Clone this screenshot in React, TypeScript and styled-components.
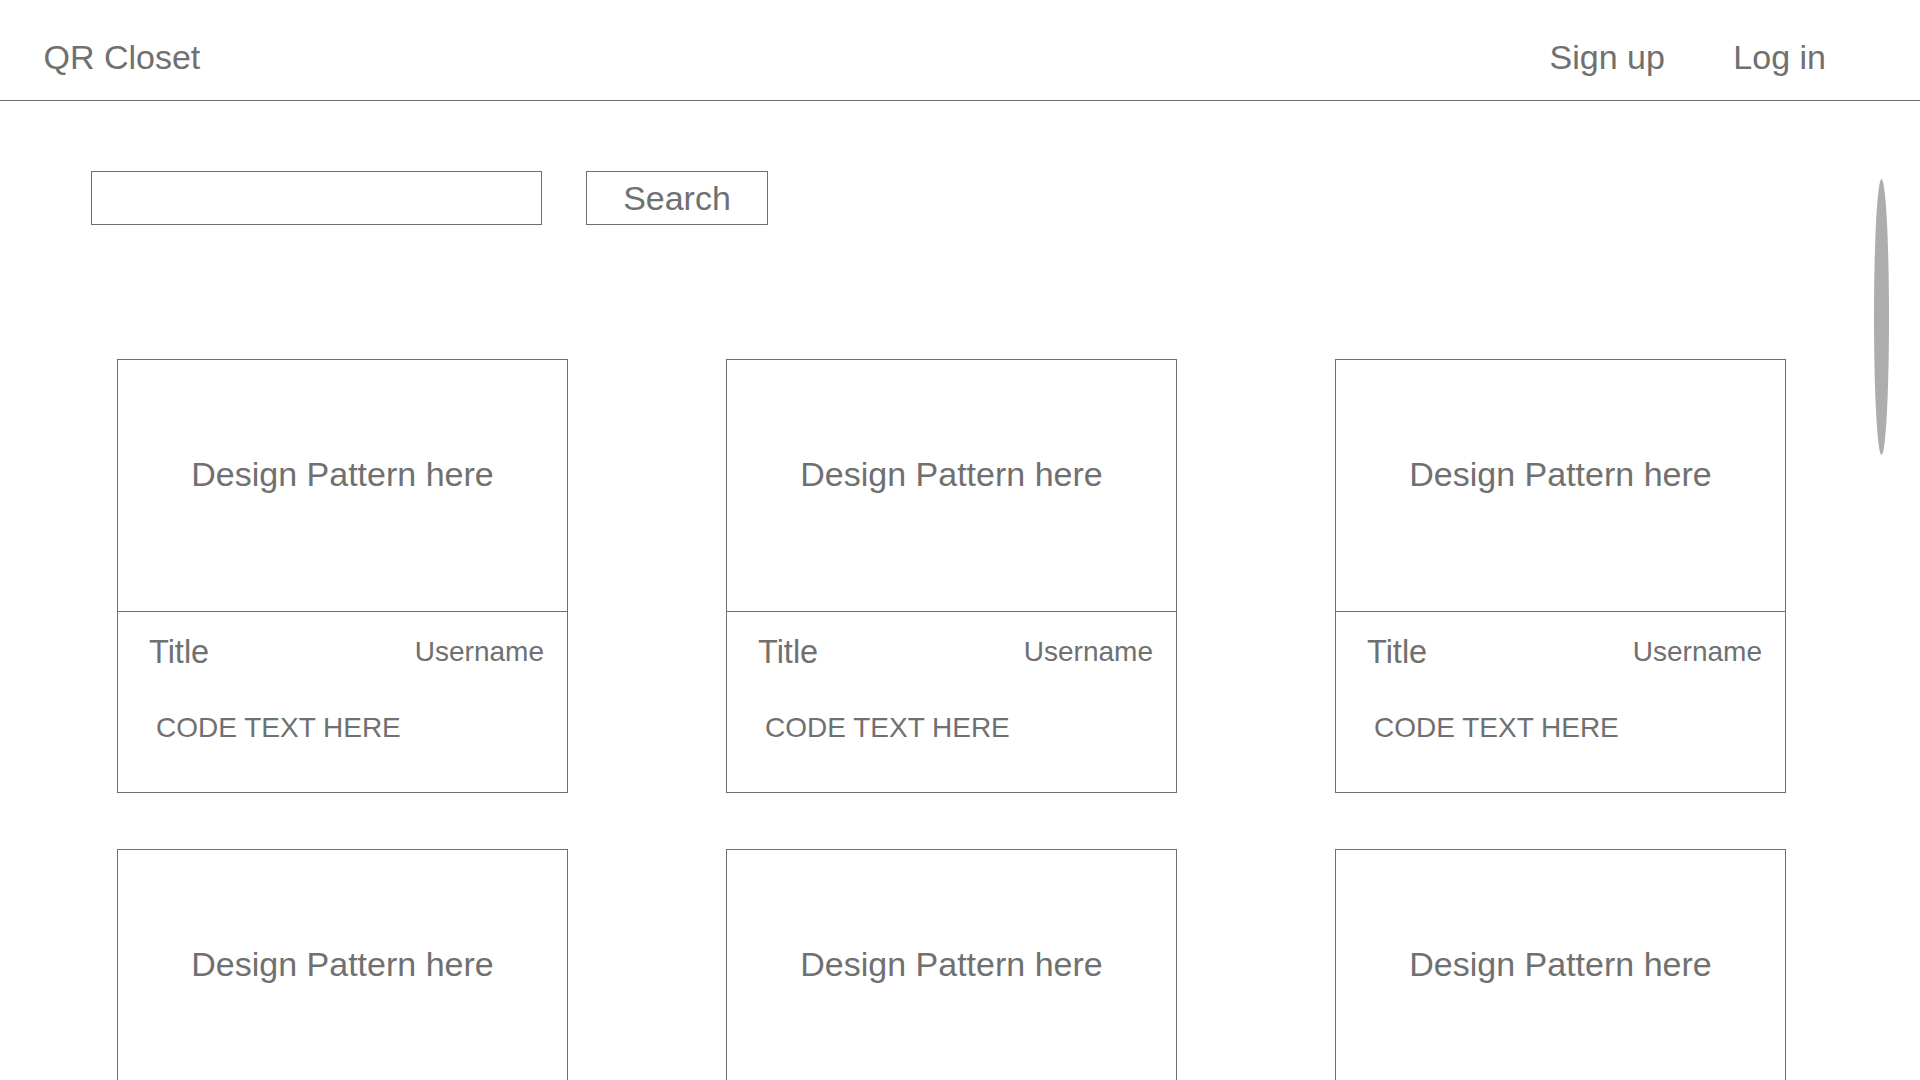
import React from "react";
import styled, { createGlobalStyle } from "styled-components";

const ink = "#707070";

const GlobalStyle = createGlobalStyle`
  *, *::before, *::after { box-sizing: border-box; }
  html, body {
    margin: 0;
    padding: 0;
    background: #ffffff;
    overflow: hidden;
    height: 100%;
  }
  body {
    font-family: "Liberation Sans", Arial, sans-serif;
    color: ${ink};
  }
`;

const Page = styled.div`
  position: relative;
  width: 1920px;
  min-height: 1080px;
`;

const Header = styled.header`
  display: flex;
  align-items: flex-start;
  height: 101px;
  padding: 39.5px 94px 0 43.5px;
  border-bottom: 1px solid ${ink};
`;

const Brand = styled.div`
  font-size: 34px;
  line-height: 1;
`;

const Nav = styled.nav`
  margin-left: auto;
  display: flex;
  gap: 68.5px;
`;

const NavLink = styled.a`
  font-size: 34px;
  line-height: 1;
  color: ${ink};
  text-decoration: none;
  cursor: pointer;
`;

const SearchRow = styled.div`
  display: flex;
  gap: 44px;
  margin-top: 70px;
  padding-left: 91px;
`;

const SearchInput = styled.input`
  width: 451px;
  height: 54px;
  border: 1px solid ${ink};
  border-radius: 0;
  background: #fff;
  padding: 0 12px;
  font-family: "Liberation Sans", Arial, sans-serif;
  font-size: 24px;
  color: ${ink};
  outline: none;
`;

const SearchButton = styled.button`
  width: 182px;
  height: 54px;
  border: 1px solid ${ink};
  border-radius: 0;
  background: #fff;
  padding: 0;
  font-family: "Liberation Sans", Arial, sans-serif;
  font-size: 34px;
  line-height: 1;
  color: ${ink};
  cursor: pointer;
`;

const Grid = styled.main`
  display: grid;
  grid-template-columns: repeat(3, 451px);
  column-gap: 158px;
  row-gap: 56px;
  margin-top: 134px;
  padding-left: 117px;
`;

const Card = styled.article`
  display: flex;
  flex-direction: column;
  height: 434px;
  border: 1px solid ${ink};
`;

const Pattern = styled.div`
  height: 252px;
  flex-shrink: 0;
  border-bottom: 1px solid ${ink};
  padding-top: 97px;
  text-align: center;
  font-size: 34px;
  line-height: 1;
`;

const Info = styled.div`
  flex: 1;
  padding: 24px 23px 0 31px;
`;

const InfoHead = styled.div`
  display: flex;
  align-items: center;
  justify-content: space-between;
  height: 32px;
`;

const Title = styled.span`
  font-size: 32.5px;
  line-height: 1;
`;

const Username = styled.span`
  font-size: 28px;
  line-height: 1;
`;

const Code = styled.div`
  margin: 46px 0 0 7px;
  font-size: 28px;
  line-height: 1;
`;

const ScrollThumb = styled.div`
  position: absolute;
  left: 1874px;
  top: 179px;
  width: 15px;
  height: 276px;
  border-radius: 50%;
  background: #adadad;
`;

const items = Array.from({ length: 6 }, (_, i) => i);

export default function App() {
  return (
    <Page>
      <GlobalStyle />
      <Header>
        <Brand>QR Closet</Brand>
        <Nav>
          <NavLink>Sign up</NavLink>
          <NavLink>Log in</NavLink>
        </Nav>
      </Header>
      <SearchRow>
        <SearchInput type="text" aria-label="Search" />
        <SearchButton type="button">Search</SearchButton>
      </SearchRow>
      <Grid>
        {items.map((i) => (
          <Card key={i}>
            <Pattern>Design Pattern here</Pattern>
            <Info>
              <InfoHead>
                <Title>Title</Title>
                <Username>Username</Username>
              </InfoHead>
              <Code>CODE TEXT HERE</Code>
            </Info>
          </Card>
        ))}
      </Grid>
      <ScrollThumb />
    </Page>
  );
}
